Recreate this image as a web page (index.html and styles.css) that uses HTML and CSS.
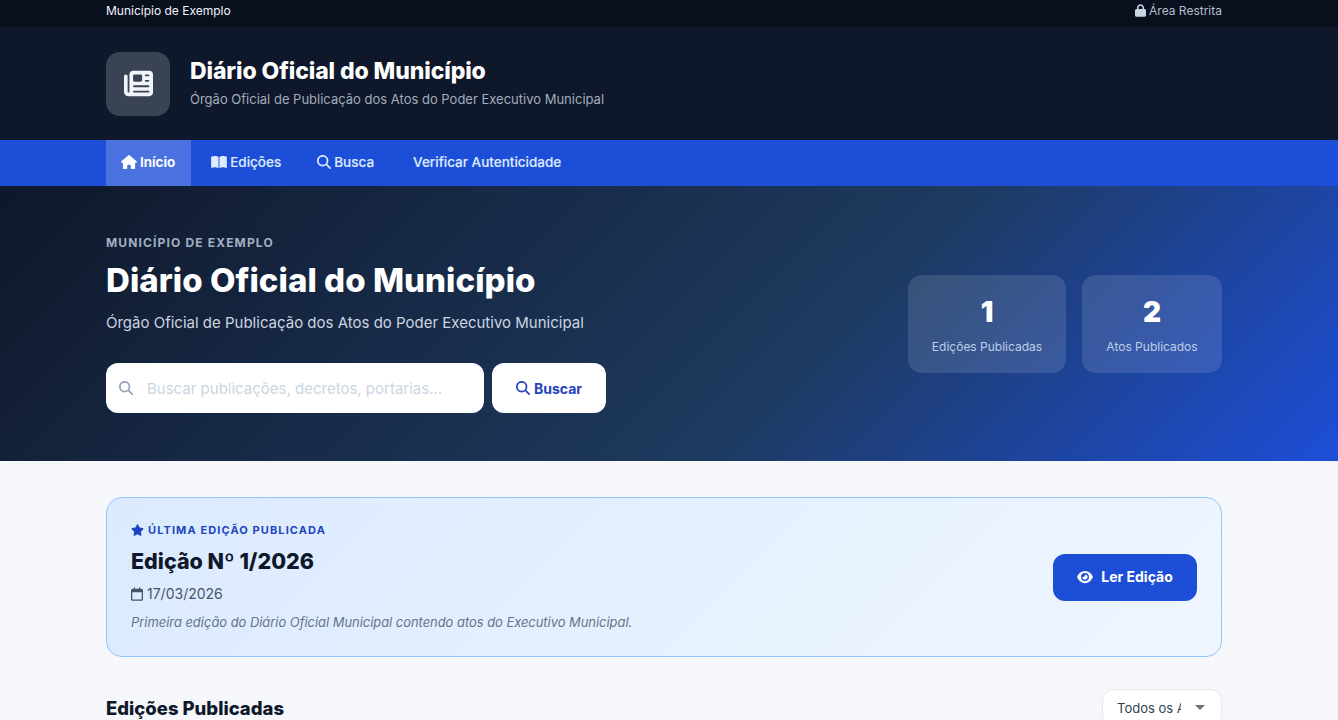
FILE: index.html
```html
<!DOCTYPE html>
<html lang="pt-BR">
<head>
<meta charset="utf-8">
<title>Diário Oficial do Município</title>
<link rel="stylesheet" href="styles.css">
</head>
<body>
<div class="topbar wrap">
  <span class="topbar-name">Município de Exemplo</span>
  <a class="topbar-link"><svg class="ic" viewBox="0 0 448 512"><path d="M144 144v48H304V144c0-44.2-35.8-80-80-80s-80 35.8-80 80zM80 192V144C80 64.5 144.5 0 224 0s144 64.5 144 144v48h16c35.3 0 64 28.7 64 64V448c0 35.3-28.7 64-64 64H64c-35.3 0-64-28.7-64-64V256c0-35.3 28.7-64 64-64H80z"/></svg>Área Restrita</a>
</div>
<header class="brand wrap">
  <div class="logo"><svg viewBox="0 0 512 512"><path d="M96 96c0-35.3 28.7-64 64-64H448c35.3 0 64 28.7 64 64V416c0 35.3-28.7 64-64 64H80c-44.2 0-80-35.8-80-80V128c0-17.7 14.3-32 32-32s32 14.3 32 32V400c0 8.8 7.2 16 16 16s16-7.2 16-16V96zm64 24v80c0 13.3 10.7 24 24 24H296c13.3 0 24-10.7 24-24V120c0-13.3-10.7-24-24-24H184c-13.3 0-24 10.7-24 24zm208-8c0 8.8 7.2 16 16 16h48c8.8 0 16-7.2 16-16s-7.2-16-16-16H384c-8.8 0-16 7.2-16 16zm0 96c0 8.8 7.2 16 16 16h48c8.8 0 16-7.2 16-16s-7.2-16-16-16H384c-8.8 0-16 7.2-16 16zM160 304c0 8.8 7.2 16 16 16H432c8.8 0 16-7.2 16-16s-7.2-16-16-16H176c-8.8 0-16 7.2-16 16zm0 96c0 8.8 7.2 16 16 16H432c8.8 0 16-7.2 16-16s-7.2-16-16-16H176c-8.8 0-16 7.2-16 16z"/></svg></div>
  <div class="brand-text">
    <div class="brand-title">Diário Oficial do Município</div>
    <div class="brand-sub">Órgão Oficial de Publicação dos Atos do Poder Executivo Municipal</div>
  </div>
</header>
<nav class="nav wrap">
  <a class="nav-item active"><svg class="ic-home" viewBox="0 0 576 512"><path d="M575.8 255.5c0 18-15 32.1-32 32.1h-32l.7 160.2c0 2.7-.2 5.4-.5 8.1V472c0 22.1-17.9 40-40 40H456c-1.1 0-2.2 0-3.3-.1c-1.4 .1-2.8 .1-4.2 .1H416 392c-22.1 0-40-17.9-40-40V448 384c0-17.7-14.3-32-32-32H256c-17.7 0-32 14.3-32 32v64 24c0 22.1-17.9 40-40 40H160 128.1c-1.5 0-3-.1-4.5-.2c-1.2 .1-2.4 .2-3.6 .2H104c-22.1 0-40-17.9-40-40V360c0-.9 0-1.9 .1-2.8V287.6H32c-18 0-32-14-32-32.1c0-9 3-17 10-24L266.4 8c7-7 15-8 22-8s15 2 21 7L564.8 231.5c8 7 12 15 11 24z"/></svg>Início</a>
  <a class="nav-item"><svg class="ic-home" viewBox="0 0 576 512"><path d="M249.6 471.5c10.8 3.8 22.4-4.1 22.4-15.5V78.6c0-4.2-1.6-8.4-5-11C247.4 52 202.4 32 144 32C93.5 32 46.3 45.3 18.1 56.1C6.8 60.5 0 71.7 0 83.8V454.1c0 11.9 12.8 20.2 24.1 16.5C55.6 460.1 105.5 448 144 448c33.9 0 79 14 105.6 23.5zm76.8 0C353 462 398.1 448 432 448c38.5 0 88.4 12.1 119.9 22.6c11.3 3.8 24.1-4.6 24.1-16.5V83.8c0-12.1-6.8-23.3-18.1-27.6C529.7 45.3 482.5 32 432 32c-58.4 0-103.4 20-123 35.6c-3.3 2.6-5 6.8-5 11V456c0 11.4 11.7 19.3 22.4 15.5z"/></svg>Edições</a>
  <a class="nav-item"><svg class="ic-search" viewBox="0 0 512 512"><path d="M416 208c0 45.9-14.9 88.3-40 122.7L502.6 457.4c12.5 12.5 12.5 32.8 0 45.3s-32.8 12.5-45.3 0L330.7 376c-34.4 25.2-76.8 40-122.7 40C93.1 416 0 322.9 0 208S93.1 0 208 0S416 93.1 416 208zM208 352a144 144 0 1 0 0-288 144 144 0 1 0 0 288z"/></svg>Busca</a>
  <a class="nav-item nav-verify">Verificar Autenticidade</a>
</nav>
<section class="hero wrap">
  <div class="hero-main">
    <div class="eyebrow">MUNICÍPIO DE EXEMPLO</div>
    <h1 class="hero-title">Diário Oficial do Município</h1>
    <p class="hero-sub">Órgão Oficial de Publicação dos Atos do Poder Executivo Municipal</p>
    <form class="search">
      <div class="search-box">
        <svg class="search-ic" viewBox="0 0 512 512"><path d="M416 208c0 45.9-14.9 88.3-40 122.7L502.6 457.4c12.5 12.5 12.5 32.8 0 45.3s-32.8 12.5-45.3 0L330.7 376c-34.4 25.2-76.8 40-122.7 40C93.1 416 0 322.9 0 208S93.1 0 208 0S416 93.1 416 208zM208 352a144 144 0 1 0 0-288 144 144 0 1 0 0 288z"/></svg>
        <input class="search-input" type="text" placeholder="Buscar publicações, decretos, portarias...">
      </div>
      <button class="search-btn" type="button"><svg class="ic-search" viewBox="0 0 512 512"><path d="M416 208c0 45.9-14.9 88.3-40 122.7L502.6 457.4c12.5 12.5 12.5 32.8 0 45.3s-32.8 12.5-45.3 0L330.7 376c-34.4 25.2-76.8 40-122.7 40C93.1 416 0 322.9 0 208S93.1 0 208 0S416 93.1 416 208zM208 352a144 144 0 1 0 0-288 144 144 0 1 0 0 288z"/></svg>Buscar</button>
    </form>
  </div>
  <div class="stats">
    <div class="stat stat-a"><div class="stat-num">1</div><div class="stat-label">Edições Publicadas</div></div>
    <div class="stat stat-b"><div class="stat-num">2</div><div class="stat-label">Atos Publicados</div></div>
  </div>
</section>
<main class="content wrap">
  <section class="latest">
    <div>
      <div class="latest-tag"><svg class="ic-star" viewBox="0 0 576 512"><path d="M316.9 18C311.6 7 300.4 0 288.1 0s-23.4 7-28.8 18L195 150.3 51.4 171.5c-12 1.8-22 10.2-25.7 21.7s-.7 24.2 7.9 32.7L137.8 329 113.2 474.7c-2 12 3 24.2 12.9 31.3s23 8 33.8 2.3l128.3-68.5 128.3 68.5c10.8 5.7 23.9 4.9 33.8-2.3s14.9-19.3 12.9-31.3L438.5 329 542.7 225.9c8.6-8.5 11.7-21.2 7.9-32.7s-13.7-19.9-25.7-21.7L381.2 150.3 316.9 18z"/></svg>ÚLTIMA EDIÇÃO PUBLICADA</div>
      <h2 class="latest-title">Edição Nº 1/2026</h2>
      <div class="latest-date"><svg class="ic-cal" viewBox="0 0 448 512"><path d="M152 24c0-13.3-10.7-24-24-24s-24 10.7-24 24V64H64C28.7 64 0 92.7 0 128v16 48V448c0 35.3 28.7 64 64 64H384c35.3 0 64-28.7 64-64V192 144 128c0-35.3-28.7-64-64-64H344V24c0-13.3-10.7-24-24-24s-24 10.7-24 24V64H152V24zM48 192H400V448c0 8.8-7.2 16-16 16H64c-8.8 0-16-7.2-16-16V192z"/></svg>17/03/2026</div>
      <p class="latest-desc">Primeira edição do Diário Oficial Municipal contendo atos do Executivo Municipal.</p>
    </div>
    <a class="read-btn"><svg class="ic-eye" viewBox="0 0 576 512"><path d="M288 32c-80.8 0-145.5 36.8-192.6 80.6C48.6 156 17.3 208 2.5 243.7c-3.3 7.9-3.3 16.7 0 24.6C17.3 304 48.6 356 95.4 399.4C142.5 443.2 207.2 480 288 480s145.5-36.8 192.6-80.6c46.8-43.5 78.1-95.4 93-131.1c3.3-7.9 3.3-16.7 0-24.6c-14.9-35.7-46.2-87.7-93-131.1C433.5 68.8 368.8 32 288 32zM144 256a144 144 0 1 1 288 0 144 144 0 1 1 -288 0zm144-64c0 35.3-28.7 64-64 64c-7.1 0-13.9-1.2-20.3-3.3c-5.5-1.8-11.9 1.6-11.7 7.4c.3 6.9 1.3 13.8 3.2 20.7c13.7 51.2 66.4 81.6 117.6 67.9s81.6-66.4 67.9-117.6c-11.1-41.5-47.8-69.4-88.6-71.1c-5.8-.2-9.2 6.1-7.4 11.7c2.1 6.4 3.3 13.2 3.3 20.3z"/></svg>Ler Edição</a>
  </section>
  <div class="list-head">
    <h2 class="list-title">Edições Publicadas</h2>
    <div class="year-wrap">
      <select class="year-select"><option>Todos os Anos</option></select>
      <span class="caret"></span>
    </div>
  </div>
</main>
</body>
</html>
```

FILE: styles.css
```css
* { box-sizing: border-box; }
html, body { margin: 0; height: 720px; overflow: hidden; }
body { background: #f5f7fb; font-family: Inter, "Liberation Sans", sans-serif; color: #0f172a; }
svg { fill: currentColor; display: block; flex: none; }
.wrap { padding-left: 106px; padding-right: 116px; }

.topbar { height: 27px; padding-bottom: 6px; background: #0a0f1e; display: flex; align-items: center; justify-content: space-between; font-size: 12px; }
.topbar-name { color: #f1f5f9; }
.topbar-link { color: #b4bdcb; display: flex; align-items: center; gap: 3px; }
.ic { width: 11px; height: 13px; color: #cbd5e1; }

.brand { height: 113px; background: #0f172a; display: flex; align-items: center; gap: 20px; }
.logo { width: 64px; height: 64px; border-radius: 14px; background: #3a4353; display: flex; align-items: center; justify-content: center; color: #f1f5f9; }
.logo svg { width: 29px; height: 29px; }
.brand-text { margin-top: -2px; }
.brand-title { font-size: 23px; font-weight: 800; color: #fff; line-height: 30px; letter-spacing: -0.1px; }
.brand-sub { font-size: 13px; color: #a3adbc; line-height: 20px; margin-top: 3px; }

.nav { height: 46px; background: #1d4ed8; display: flex; align-items: stretch; gap: 4px; }
.nav-item { display: flex; align-items: center; gap: 3px; padding: 0 16px 2px; font-size: 13.5px; font-weight: 500; color: #dbeafe; -webkit-text-stroke: 0.15px currentColor; }
.nav-item.active { background: #4a71e0; color: #fff; padding: 0 16px 2px 15px; font-weight: 600; }
.nav-verify { margin-left: 3px; }
.ic-home { width: 16px; height: 14px; }
.ic-search { width: 14px; height: 14px; }

.hero { height: 275px; background: linear-gradient(135deg, #0f172a 0%, #1e3a5f 60%, #1d4ed8 100%); display: flex; align-items: center; justify-content: space-between; }
.hero-main { align-self: flex-start; margin-top: 49px; }
.eyebrow { font-size: 12px; font-weight: 700; letter-spacing: 1.15px; color: #a3afc0; line-height: 16px; }
.hero-title { margin: 7px 0 0; font-size: 33px; font-weight: 800; line-height: 44px; color: #fff; letter-spacing: 0.05px; }
.hero-sub { margin: 10px 0 0; font-size: 15px; line-height: 22px; color: #cbd5e1; }
.search { display: flex; gap: 8px; margin-top: 29px; }
.search-box { width: 378px; height: 50px; background: #fff; border-radius: 12px; display: flex; align-items: center; gap: 14px; padding: 0 13px; }
.search-ic { width: 14px; height: 14px; color: #94a3b8; }
.search-input { flex: 1; min-width: 0; border: 0; outline: 0; background: none; padding: 0; font: 15px Inter, "Liberation Sans", sans-serif; }
.search-input::placeholder { color: #cbd5e1; }
.search-btn { width: 114px; height: 50px; border: 0; border-radius: 12px; background: #fff; padding: 0; display: flex; align-items: center; justify-content: center; gap: 4px; color: #2344bd; font: 700 14px Inter, "Liberation Sans", sans-serif; }

.stats { display: flex; gap: 16px; }
.stat { height: 98px; padding-top: 2px; border-radius: 14px; background: rgba(255,255,255,.12); display: flex; flex-direction: column; align-items: center; justify-content: center; }
.stat-a { width: 158px; }
.stat-b { width: 140px; }
.stat-num { font-size: 28px; font-weight: 900; line-height: 36px; color: #fff; }
.stat-label { font-size: 12px; line-height: 18px; margin-top: 8px; color: #bfcde6; }

.content { padding-top: 36px; }
.latest { height: 160px; border: 1px solid #93c5fd; border-radius: 16px; background: linear-gradient(135deg, #dbeafe, #eff6ff); display: flex; align-items: center; justify-content: space-between; padding: 0 24px; }
.latest-tag { display: flex; align-items: center; gap: 5px; font-size: 11px; font-weight: 700; letter-spacing: 1.1px; color: #2045c0; line-height: 16px; }
.ic-star { width: 13px; height: 12px; margin-right: -1px; }
.latest-title { margin: 8px 0 0; font-size: 21.5px; font-weight: 800; line-height: 30px; color: #0f172a; }
.latest-date { display: flex; align-items: center; gap: 4px; margin-top: 8px; font-size: 14px; line-height: 20px; color: #475569; }
.ic-cal { width: 12px; height: 14px; }
.latest-desc { margin: 9px 0 0; font-size: 12.9px; line-height: 20px; font-style: italic; color: #64748b; }
.read-btn { width: 144px; height: 47px; padding-bottom: 1px; border-radius: 12px; background: #1d4ed8; color: #fff; display: flex; align-items: center; justify-content: center; gap: 8px; font-size: 14px; font-weight: 700; }
.ic-eye { width: 16px; height: 14px; }

.list-head { display: flex; align-items: center; justify-content: space-between; margin-top: 32px; height: 38px; }
.list-title { margin: 0; font-size: 18.5px; font-weight: 800; line-height: 40px; color: #0f172a; }
.year-wrap { position: relative; width: 120px; height: 38px; }
.year-select { appearance: none; width: 100%; height: 100%; background: #fff; border: 1px solid #e2e8f0; border-radius: 12px; padding: 0 40px 0 14px; font: 13px Inter, "Liberation Sans", sans-serif; color: #334155; outline: 0; }
.caret { position: absolute; left: 93px; top: 16px; width: 0; height: 0; border-left: 5.5px solid transparent; border-right: 5.5px solid transparent; border-top: 5.5px solid #6b7280; }
```
